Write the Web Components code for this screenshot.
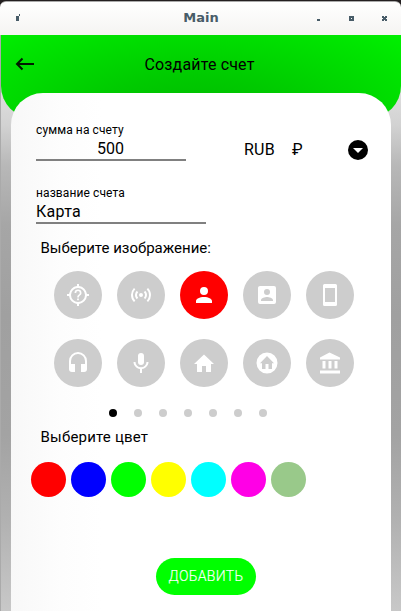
<!DOCTYPE html>
<html lang="ru">
<head>
<meta charset="utf-8">
<title>Main</title>
<style>
html,body{margin:0;height:100%;overflow:hidden;background:#231f20}
body{font-family:Roboto,"Liberation Sans",sans-serif;color:#000}
</style>
</head>
<body>
<app-window></app-window>
<script>
const define = (name, html) => customElements.define(name, class extends HTMLElement {
  constructor() {
    super();
    const t = document.createElement('template');
    t.innerHTML = typeof html === 'function' ? html(this) : html;
    this.attachShadow({ mode: 'open' }).append(t.content.cloneNode(true));
  }
});

const ICONS = {
  help: '<path d="M20.94 11A8.99 8.99 0 0 0 13 3.06V1h-2v2.06A8.99 8.99 0 0 0 3.06 11H1v2h2.06A8.99 8.99 0 0 0 11 20.94V23h2v-2.06A8.99 8.99 0 0 0 20.94 13H23v-2h-2.06zM12 19a7 7 0 1 1 0-14 7 7 0 0 1 0 14z"/><path d="M11.1 15.4h1.8v1.8h-1.8zM12 6.5a3.5 3.5 0 0 0-3.5 3.4h1.7a1.8 1.8 0 0 1 3.6 0c0 1.8-2.6 1.6-2.6 4.5h1.7c0-2 2.6-2.2 2.6-4.5A3.5 3.5 0 0 0 12 6.5z"/>',
  signal: '<path d="M4.93 4.93A9.97 9.97 0 0 0 2 12c0 2.76 1.12 5.26 2.93 7.07l1.41-1.41A7.94 7.94 0 0 1 4 12c0-2.21.89-4.22 2.34-5.66L4.93 4.93zm14.14 0-1.41 1.41A7.96 7.96 0 0 1 20 12c0 2.22-.89 4.22-2.34 5.66l1.41 1.41A9.97 9.97 0 0 0 22 12c0-2.76-1.12-5.26-2.93-7.07zM7.76 7.76A5.98 5.98 0 0 0 6 12c0 1.65.67 3.15 1.76 4.24l1.41-1.41A3.99 3.99 0 0 1 8 12c0-1.11.45-2.11 1.17-2.83L7.76 7.76zm8.48 0-1.41 1.41A3.99 3.99 0 0 1 16 12c0 1.11-.45 2.11-1.17 2.83l1.41 1.41A5.98 5.98 0 0 0 18 12c0-1.65-.67-3.15-1.76-4.24zM12 10a2 2 0 1 0 0 4 2 2 0 0 0 0-4z"/>',
  person: '<path d="M12 4a4 4 0 1 0 0 8 4 4 0 0 0 0-8zm0 10c-4.42 0-8 1.79-8 4v2h16v-2c0-2.21-3.58-4-8-4z"/>',
  contact: '<path fill-rule="evenodd" d="M5 3h14a2 2 0 0 1 2 2v14a2 2 0 0 1-2 2H5a2 2 0 0 1-2-2V5c0-1.1.9-2 2-2zm7 3a3 3 0 1 0 0 6 3 3 0 0 0 0-6zm6 12v-1c0-2-4-3.1-6-3.1S6 15 6 17v1z"/>',
  phone: '<path fill-rule="evenodd" d="M6.5 1h11A1.5 1.5 0 0 1 19 2.5v19a1.5 1.5 0 0 1-1.5 1.5h-11A1.5 1.5 0 0 1 5 21.5v-19A1.5 1.5 0 0 1 6.5 1zM7 5v14h10V5z"/>',
  headphones: '<path d="M12 1a9 9 0 0 0-9 9v8a3 3 0 0 0 3 3h3v-8H5v-3a7 7 0 0 1 14 0v3h-4v8h3a3 3 0 0 0 3-3v-8a9 9 0 0 0-9-9z"/>',
  mic: '<path d="M12 2a3 3 0 0 0-3 3v6a3 3 0 0 0 6 0V5a3 3 0 0 0-3-3zm7.5 9c0 3.53-2.9 6.44-6.5 6.93V22h-2v-4.07c-3.6-.49-6.5-3.4-6.5-6.93h2a5.5 5.2 0 0 0 11 0z"/>',
  home: '<path d="M10 21v-6h4v6h5v-8h3L12 3.5 2 13h3v8z"/>',
  homeRound: '<path fill-rule="evenodd" d="M12 1.5a10.5 10.5 0 1 1 0 21 10.5 10.5 0 0 1 0-21zM5 12.2h2V18h3.5v-5h3v5H17v-5.8h2L12 5z"/>',
  bank: '<path d="M11.5 1.5 2 6.5v2h20v-2M16.500 10v7.500h3V10M2 22.500h20v-3H2M10.500 10v7.500h3V10M4.500 10v7.500h3V10z"/>'
};

define('title-bar', `<style>
:host{display:grid;grid-template-columns:100px 1fr 100px;align-items:center;box-sizing:border-box;height:34px;margin-top:1px;
 border-radius:6px 6px 0 0;background:linear-gradient(#fff,#f5f4f2);border-top:1px solid #aaa;font:bold 13px/18px "DejaVu Sans",sans-serif;color:#485c68}
b{text-align:center;transform:translateY(-1px);padding-left:1px}svg{display:block}
</style><svg width="100" height="33" fill="#485c68"><path d="M16 14h3v5h-3zM19 12h1v2h-1z"/></svg><b><slot></slot></b>
<svg width="100" height="33" fill="#485c68"><path d="M16 17h3v2h-3z"/><path fill-rule="evenodd" d="M48 14h5v5h-5zM50 16v1h1v-1z"/><path d="M81 14h2v1h1v-1h2v2h-1v1h1v2h-2v-1h-1v1h-2v-2h1v-1h-1z"/></svg>`);

define('app-header', `<style>
:host{display:grid;grid-template-columns:50px 1fr 50px;box-sizing:border-box;height:83px;padding-top:17px;border-radius:0 0 32px 32px;
 background:radial-gradient(ellipse 310px 130px at 48% 105%,#00b800 0%,#00ca00 35%,#00e600 80%,#00f400 100%);font-size:16px;line-height:25px}
h1{font:inherit;margin:0;text-align:center;letter-spacing:.16px;padding-right:3px}
svg{display:block;margin:2px 0 0 12px}
</style><svg width="24" height="20" viewBox="0 0 24 20" fill="none" stroke="#001a00" stroke-width="2"><path d="M21 10H4M9.5 4.5 4 10l5.5 5.5"/></svg><h1><slot></slot></h1>`);

define('text-field', el => `<style>
:host{display:block;width:var(--w);border-bottom:2px solid #808080;box-sizing:border-box;height:40px}
label{display:block;font-size:12px;line-height:18px;white-space:nowrap;letter-spacing:.1px}
div{font-size:16px;line-height:20px;text-align:var(--align,left);letter-spacing:var(--spacing,0)}
</style><label>${el.getAttribute('label')}</label><div><slot></slot></div>`);

define('currency-select', `<style>
:host{display:flex;align-items:center;height:20px;width:124px;font-size:16px;line-height:20px;letter-spacing:.2px}
::slotted(*){width:48px}svg{display:block;margin-left:auto}
</style><slot></slot><svg width="20" height="20"><circle cx="10" cy="10" r="10"/><path d="M5 8h10l-5 5z" fill="#fff"/></svg>`);

define('icon-choice', el => `<style>
:host{display:grid;place-items:center;width:48px;height:48px;border-radius:50%;background:#cdcdcd}
:host([selected]){background:#f00}
svg{display:block;fill:#fff}
</style><svg width="24" height="24" viewBox="0 0 24 24">${ICONS[el.getAttribute('name')]}</svg>`);

define('icon-grid', `<style>
:host{display:grid;grid-template-columns:repeat(5,48px);gap:20px 15px}
</style><slot></slot>`);

define('page-dots', `<style>
:host{display:flex;gap:17px}
i{width:8px;height:8px;border-radius:50%;background:#cdcdcd}i:first-of-type{background:#000}
</style>${'<i></i>'.repeat(7)}`);

define('color-row', `<style>
:host{display:flex;gap:5px}
i{width:35px;height:35px;border-radius:50%}
</style>${['#f00','#00f','#0f0','#ff0','#0ff','#ff00e6','#99c98a'].map(c => `<i style="background:${c}"></i>`).join('')}`);

define('pill-button', `<style>
:host{display:block;width:100px;height:37px}
button{all:unset;box-sizing:border-box;width:100%;height:100%;border-radius:19px;background:#0f0;color:#fff;font:300 14px/37px Roboto,sans-serif;text-align:center;letter-spacing:.3px;-webkit-text-stroke:.15px #fff}
</style><button><slot></slot></button>`);

define('account-form', `<style>
:host{display:block;box-sizing:border-box;width:380px;height:518px;margin:-25px 0 0 10px;padding:28px 0 0 25px;border-radius:32px 32px 0 0;
 background:linear-gradient(90deg,#f8f8f8,#fdfdfd 50px,#fff 90px)}
.top{display:flex}
currency-select{margin:19px 0 0 58px}
.name{margin-top:23px}
h2{font-weight:400;font-size:15px;line-height:20px;margin:0 0 0 4.5px}
icon-grid{margin:13px 0 0 18.4px}
page-dots{margin:22px 0 0 73px}
color-row{margin:15px 0 0 -5px}
pill-button{margin:61px 0 0 120px}
</style>
<div class="top"><text-field label="сумма на счету" style="--w:149px;--align:center;padding-right:1px">500</text-field>
<currency-select><span>RUB</span><span>₽</span></currency-select></div>
<text-field class="name" label="название счета" style="--w:170px;--spacing:.3px">Карта</text-field>
<h2 style="margin-top:14px">Выберите изображение:</h2>
<icon-grid>${Object.keys(ICONS).map(n => `<icon-choice name="${n}"${n === 'person' ? ' selected' : ''}></icon-choice>`).join('')}</icon-grid>
<page-dots></page-dots>
<h2 style="margin-top:10px;letter-spacing:.2px">Выберите цвет</h2>
<color-row></color-row>
<pill-button>ДОБАВИТЬ</pill-button>`);

define('app-window', `<style>
:host{display:block;height:611px;overflow:hidden}
main{height:576px;padding-left:1px;box-sizing:border-box;
 background:linear-gradient(90deg,#aaa 1px,transparent 1px),linear-gradient(#ddd 60px,#d2d2d2 90px,#b8b8b8 130px,#a6a6a6 190px,#a0a0a0 280px,#a3a3a3 400px,#b0b0b0 480px,#c8c8c8 576px)}
</style><title-bar>Main</title-bar><main><app-header>Создайте счет</app-header><account-form></account-form></main>`);

// The amount field keeps its full 150px rule while its value sits slightly left of centre.
const form = document.querySelector('app-window').shadowRoot.querySelector('account-form');
const amount = form.shadowRoot.querySelector('text-field');
amount.style.setProperty('--w', '150px');
</script>
</body>
</html>
